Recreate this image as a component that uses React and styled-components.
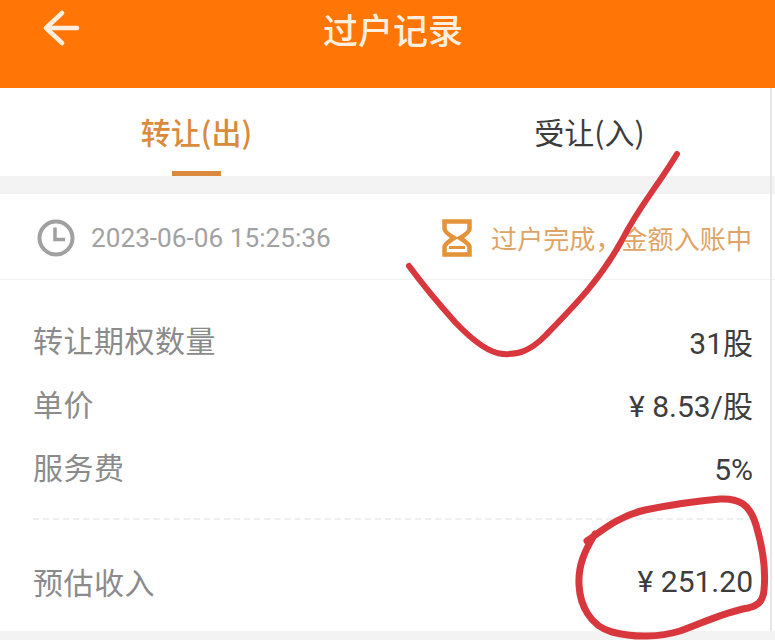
import React from "react";
import styled, { createGlobalStyle } from "styled-components";

const Global = createGlobalStyle`
  html, body { margin: 0; padding: 0; background: #fff; }
  body { font-family: Roboto, "Noto Sans CJK SC", sans-serif; }
`;
const Page = styled.div`
  position: relative; width: 775px; height: 640px; overflow: hidden; background: #fff;
  display: flex; flex-direction: column;
`;
const Header = styled.header`
  height: 88px; flex: none; background: #ff7607; color: #fdeedd;
  display: flex; justify-content: center; padding: 5px 0 0 11px; box-sizing: border-box;
  position: relative;
`;
const Back = styled.svg`
  position: absolute; left: 42px; top: 10px; width: 38px; height: 36px;
`;
const Title = styled.h1`
  margin: 0; font-size: 35px; line-height: 48px; font-weight: 500; letter-spacing: 0;
  font-family: "Noto Sans CJK SC", sans-serif;
`;
const Tabs = styled.nav`
  height: 88px; flex: none; display: grid; grid-template-columns: 393px 393px;
`;
const Tab = styled.div`
  position: relative; display: flex; justify-content: center; padding-top: 22px; box-sizing: border-box;
  font-family: "Noto Sans CJK SC", sans-serif;
  font-size: 30px; line-height: 42px; font-weight: ${p => p.$active ? 500 : 400};
  color: ${p => p.$active ? "#d98a3a" : "#3c3c3c"};
`;
const Underline = styled.span`
  position: absolute; left: 172px; top: 83px; width: 49px; height: 5px; background: #d98a3f;
`;
const Gap = styled.div`
  height: 18px; flex: none; background: #f3f3f3;
`;
const StatusRow = styled.section`
  height: 86px; flex: none; box-sizing: border-box; border-bottom: 1px solid #f2f2f2;
  display: flex; align-items: center; justify-content: space-between;
  padding: 3px 23px 0 37px;
`;
const Group = styled.div`
  display: flex; align-items: center; gap: ${p => p.$gap}px;
`;
const Time = styled.span`
  font-size: 26.2px; color: #a2a2a2; font-family: Roboto, sans-serif;
`;
const Status = styled.span`
  font-size: 26.1px; color: #dfa465; font-family: "Noto Sans CJK SC", sans-serif; white-space: nowrap;
`;
const Details = styled.section`
  flex: none; padding: 38px 22px 0 33px; display: flex; flex-direction: column;
`;
const Row = styled.div`
  height: ${p => p.$h || 64}px; display: flex; justify-content: space-between; align-items: flex-start;
  font-size: 30px; line-height: 42px;
`;
const Label = styled.span`
  color: #8b8b8b; font-family: "Noto Sans CJK SC", sans-serif; letter-spacing: 0.5px;
`;
const Value = styled.span`
  color: #3d3d3d; font-family: Roboto, "Noto Sans CJK SC", sans-serif;
  transform: translateY(${p => p.$dy || 0}px);
`;
const Dash = styled.div`
  height: 0; margin: 7px 0 40px 0; border-top: 2px dashed #efefef;
`;
const Bottom = styled.div`
  position: absolute; left: 0; right: 0; top: 631px; height: 9px; background: #f3f3f3;
`;
const EdgeLine = styled.div`
  position: absolute; top: 88px; bottom: 9px; left: 770px; width: 2px; background: #e6e6e6;
`;
const Marks = styled.svg`
  position: absolute; left: 0; top: 0; width: 775px; height: 640px; pointer-events: none;
`;

export default function App() {
  return (
    <Page>
      <Global />
      <Header>
        <Back viewBox="0 0 38 36" fill="none" stroke="#fdeedd" strokeWidth="4.5" strokeLinecap="round" strokeLinejoin="round">
          <path d="M20 3 L4 18 L20 33 M4 18 H35" />
        </Back>
        <Title>过户记录</Title>
      </Header>
      <Tabs>
        <Tab $active>转让(出)<Underline /></Tab>
        <Tab>受让(入)</Tab>
      </Tabs>
      <Gap />
      <StatusRow>
        <Group $gap={16}>
          <svg width="38" height="38" viewBox="0 0 38 38" fill="none" stroke="#a0a0a0" strokeWidth="4">
            <circle cx="19" cy="19" r="16.5" />
            <path d="M18 8.5 V20.5 H28" strokeWidth="3.5" />
          </svg>
          <Time>2023-06-06 15:25:36</Time>
        </Group>
        <Group $gap={19}>
          <svg width="30" height="38" viewBox="0 0 30 38" fill="none" stroke="#e5933a" strokeWidth="4.5">
            <path d="M2.5 2.5 H27.5 V10 Q27.5 13 18 19 Q27.5 25 27.5 28 V35.5 H2.5 V28 Q2.5 25 12 19 Q2.5 13 2.5 10 Z" strokeLinejoin="miter" />
            <path d="M7 28.5 H23" strokeWidth="3" />
          </svg>
          <Status>过户完成，金额入账中</Status>
        </Group>
      </StatusRow>
      <Details>
        <Row><Label>转让期权数量</Label><Value $dy={5}>31股</Value></Row>
        <Row $h={63}><Label>单价</Label><Value $dy={4}>¥ 8.53/股</Value></Row>
        <Row $h={66}><Label>服务费</Label><Value $dy={4}>5%</Value></Row>
        <Dash />
        <Row><Label>预估收入</Label><Value $dy={1}>¥ 251.20</Value></Row>
      </Details>
      <Bottom />
      <EdgeLine />
      <Marks viewBox="0 0 775 640" fill="none" stroke="#d8383d" strokeLinecap="round" strokeLinejoin="round">
        <path strokeWidth="6" d="M677 154 C655 190 640 205 622 240 C600 280 575 305 545 336 C530 351 518 355 503 354 C488 353 472 340 455 322 C438 303 423 285 409 266" />
        <path strokeWidth="7" d="M587 541 C600 532 618 516 645 510 C670 505 695 501 720 499 C740 498 750 505 756 525 C762 545 766 570 764 590 C763 602 757 606 748 608 C725 612 705 622 680 631 C660 637 635 638 612 632 C590 626 580 605 579 585 C578 565 585 550 595 534" />
      </Marks>
    </Page>
  );
}
